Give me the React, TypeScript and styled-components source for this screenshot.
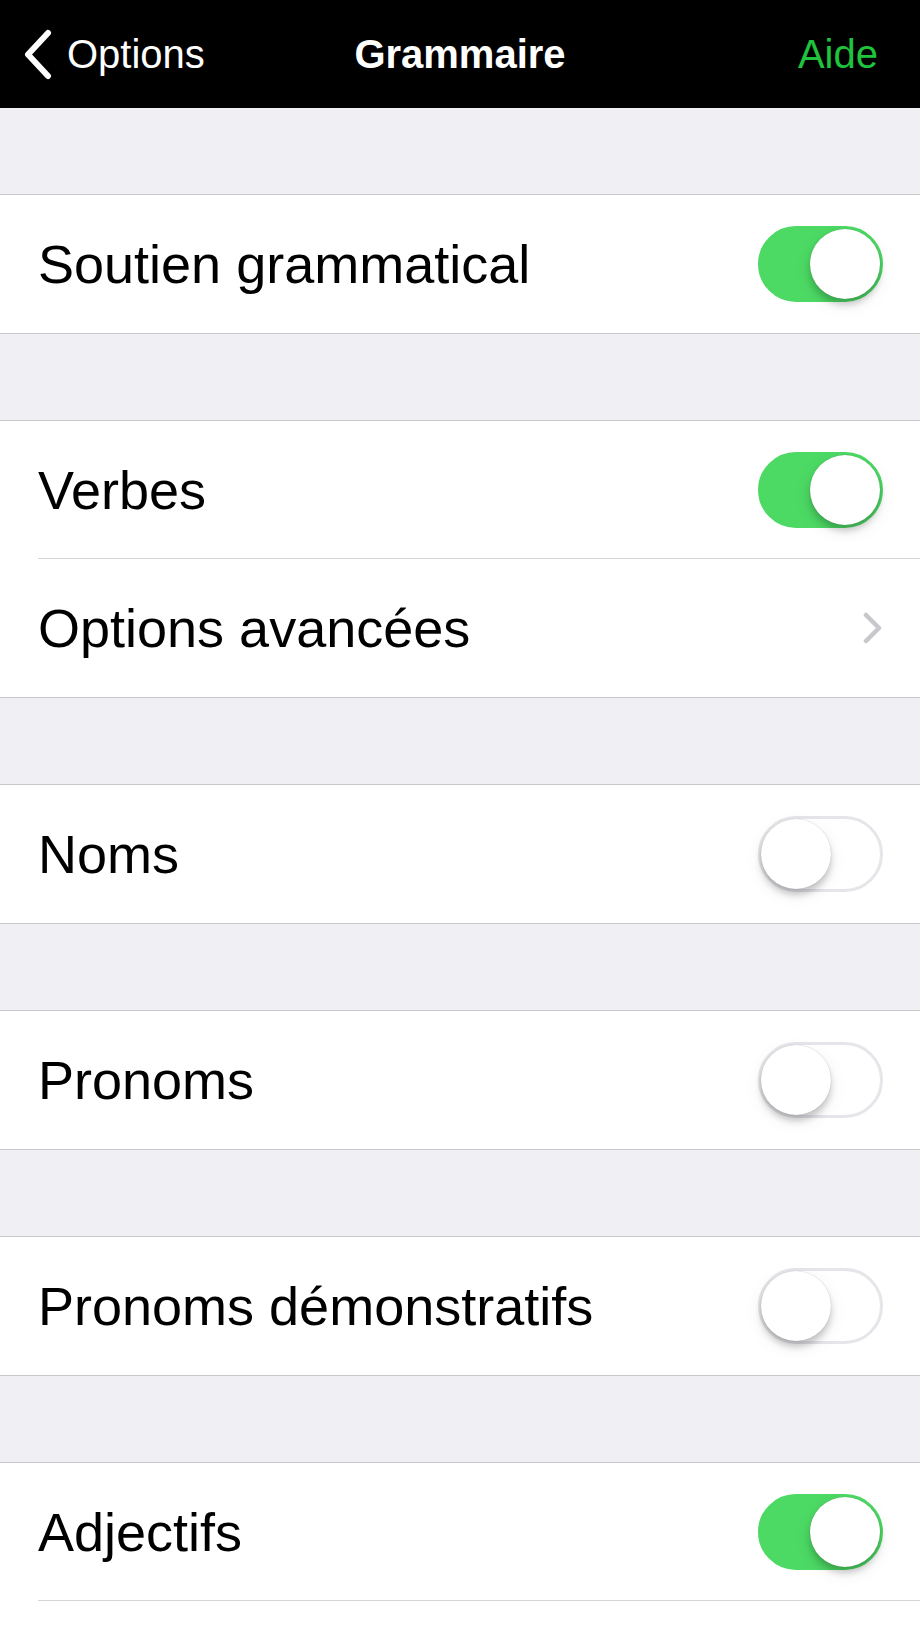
import React from 'react'
import styled, { createGlobalStyle } from 'styled-components'

const GlobalStyle = createGlobalStyle`
  html, body {
    margin: 0;
    padding: 0;
    background: #efeff4;
    font-family: "Liberation Sans", Arial, sans-serif;
    -webkit-font-smoothing: antialiased;
  }
`

type Item = { label: string, kind: 'toggle' | 'link' | 'blank', on?: boolean }

const SECTIONS: Item[][] = [
  [{ label: 'Soutien grammatical', kind: 'toggle', on: true }],
  [
    { label: 'Verbes', kind: 'toggle', on: true },
    { label: 'Options avancées', kind: 'link' },
  ],
  [{ label: 'Noms', kind: 'toggle', on: false }],
  [{ label: 'Pronoms', kind: 'toggle', on: false }],
  [{ label: 'Pronoms démonstratifs', kind: 'toggle', on: false }],
  [
    { label: 'Adjectifs', kind: 'toggle', on: true },
    { label: '', kind: 'blank' },
  ],
]

export default function App() {
  return (
    <Screen>
      <GlobalStyle />
      <NavBar>
        <BackButton>
          <svg width="30" height="51" viewBox="0 0 30 51">
            <polyline
              points="25,4 5,25.5 25,47"
              fill="none"
              stroke="#fff"
              strokeWidth="6"
              strokeLinecap="round"
              strokeLinejoin="round"
            />
          </svg>
          <span>Options</span>
        </BackButton>
        <Title>Grammaire</Title>
        <HelpButton>Aide</HelpButton>
      </NavBar>

      {SECTIONS.map((items, i) => (
        <React.Fragment key={i}>
          <SectionGap />
          <Group>
            {items.map((item, j) => (
              <Row key={j} divider={j < items.length - 1}>
                <Label>{item.label}</Label>
                {item.kind === 'toggle' && <Switch on={!!item.on}><Knob on={!!item.on} /></Switch>}
                {item.kind === 'link' && (
                  <svg width="20" height="32" viewBox="0 0 20 32">
                    <polyline
                      points="3,3 16,16 3,29"
                      fill="none"
                      stroke="#c7c7cc"
                      strokeWidth="4.5"
                      strokeLinecap="round"
                      strokeLinejoin="round"
                    />
                  </svg>
                )}
              </Row>
            ))}
          </Group>
        </React.Fragment>
      ))}
    </Screen>
  )
}

const Screen = styled.div`
  width: 920px;
  min-height: 1636px;
  background: #efeff4;
`

const NavBar = styled.div`
  height: 108px;
  background: #000;
  display: grid;
  grid-template-columns: 1fr auto 1fr;
  align-items: center;
  padding: 0 42px;
`

const BackButton = styled.div`
  display: flex;
  align-items: center;
  gap: 14px;
  margin-left: -19px;
  color: #fff;
  font-size: 40px;

  svg {
    display: block;
  }
`

const Title = styled.div`
  color: #fff;
  font-size: 40px;
  font-weight: bold;
  text-align: center;
`

const HelpButton = styled.div`
  color: #1fc33c;
  font-size: 40px;
  justify-self: end;
`

const SectionGap = styled.div`
  height: 86px;
`

const Group = styled.div`
  background: #fff;
  border-top: 1px solid #c8c7cc;
  border-bottom: 1px solid #c8c7cc;
`

const Row = styled.div<{ divider: boolean }>`
  height: 138px;
  box-sizing: border-box;
  padding: 0 37px 0 38px;
  display: flex;
  align-items: center;
  justify-content: space-between;
  position: relative;

  ${({ divider }) => divider && `
    &::after {
      content: '';
      position: absolute;
      left: 38px;
      right: 0;
      bottom: 0;
      height: 1px;
      background: #d4d3d8;
    }
  `}
`

const Label = styled.div`
  font-size: 54px;
  color: #000;
`

const Switch = styled.div<{ on: boolean }>`
  width: 125px;
  height: 76px;
  box-sizing: border-box;
  border-radius: 38px;
  position: relative;
  background: ${({ on }) => (on ? '#4cd964' : '#fff')};
  border: 3px solid ${({ on }) => (on ? '#4cd964' : '#e5e5ea')};
`

const Knob = styled.div<{ on: boolean }>`
  position: absolute;
  top: 0;
  ${({ on }) => (on ? 'right: 0;' : 'left: 0;')}
  width: 70px;
  height: 70px;
  border-radius: 50%;
  background: #fff;
  box-shadow: 0 6px 6px rgba(0, 0, 0, 0.18), 0 0 1px rgba(0, 0, 0, 0.25), 0 6px 18px rgba(0, 0, 0, 0.08);
`
